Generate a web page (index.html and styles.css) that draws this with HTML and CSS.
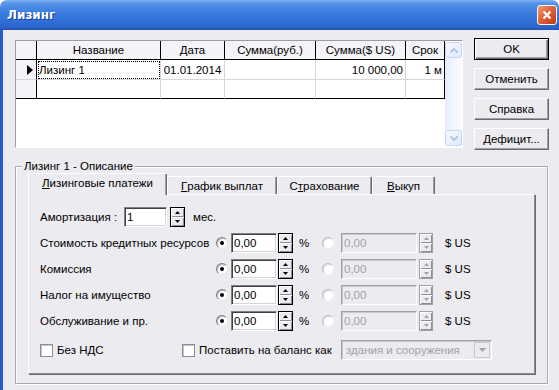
FILE: index.html
```html
<!DOCTYPE html>
<html>
<head>
  <title>Лизинг</title>
  <link rel="stylesheet" href="styles.css">
</head>
<body>
  <div class="window">
    <div class="titlebar">
      <span class="title">Лизинг</span>
      <span class="close">
        <svg class="close-icon" viewBox="0 0 10 10">
          <path d="M1.5,1.5 L8.5,8.5 M8.5,1.5 L1.5,8.5"/>
        </svg>
      </span>
    </div>

    <div class="client">
      <div class="top">
        <div class="grid">
          <div class="grid-body">
            <div class="grid-row header">
              <div class="cell fixed"></div>
              <div class="cell">Название</div>
              <div class="cell">Дата</div>
              <div class="cell">Сумма(руб.)</div>
              <div class="cell">Сумма($ US)</div>
              <div class="cell">Срок</div>
            </div>
            <div class="grid-row first">
              <div class="cell fixed indicator">
                <svg class="pointer" viewBox="0 0 6 10"><path d="M0,0 L6,5 L0,10Z"/></svg>
              </div>
              <div class="cell focus">Лизинг 1</div>
              <div class="cell center">01.01.2014</div>
              <div class="cell"></div>
              <div class="cell right">10 000,00</div>
              <div class="cell right last">1 м</div>
            </div>
            <div class="grid-row bottom">
              <div class="cell fixed"></div>
              <div class="cell"></div>
              <div class="cell"></div>
              <div class="cell"></div>
              <div class="cell"></div>
              <div class="cell last"></div>
            </div>
          </div>
          <div class="vscroll">
            <div class="sb-btn">
              <svg class="chevron" viewBox="0 0 8 5"><path d="M0.5,4.5 L4,1 L7.5,4.5"/></svg>
            </div>
            <div class="sb-track"></div>
            <div class="sb-btn">
              <svg class="chevron" viewBox="0 0 8 5"><path d="M0.5,0.5 L4,4 L7.5,0.5"/></svg>
            </div>
          </div>
        </div>

        <div class="buttons">
          <button class="btn default">OK</button>
          <button class="btn">Отменить</button>
          <button class="btn">Справка</button>
          <button class="btn">Дефицит...</button>
        </div>
      </div>

      <fieldset class="group">
        <legend>Лизинг 1 - Описание</legend>

        <div class="tabs">
          <div class="tab active w1"><u>Л</u>изинговые платежи</div>
          <div class="tab w2"><u>Г</u>рафик выплат</div>
          <div class="tab w3">С<u>т</u>рахование</div>
          <div class="tab w4"><u>В</u>ыкуп</div>
        </div>

        <div class="panel">
          <div class="row amort">
            <span class="label">Амортизация :</span>
            <span class="edit short">1</span>
            <span class="spin">
              <span class="spin-btn"><svg class="arrow" viewBox="0 0 5 3"><path d="M0,3 L2.5,0 L5,3Z"/></svg></span>
              <span class="spin-btn"><svg class="arrow" viewBox="0 0 5 3"><path d="M0,0 L2.5,3 L5,0Z"/></svg></span>
            </span>
            <span class="unit">мес.</span>
          </div>

          <div class="row rate">
            <span class="label">Стоимость кредитных ресурсов</span>
            <span class="radio checked"><span class="dot"></span></span>
            <span class="edit">0,00</span>
            <span class="spin">
              <span class="spin-btn"><svg class="arrow" viewBox="0 0 5 3"><path d="M0,3 L2.5,0 L5,3Z"/></svg></span>
              <span class="spin-btn"><svg class="arrow" viewBox="0 0 5 3"><path d="M0,0 L2.5,3 L5,0Z"/></svg></span>
            </span>
            <span class="pct">%</span>
            <span class="radio disabled"></span>
            <span class="edit wide disabled">0,00</span>
            <span class="spin disabled">
              <span class="spin-btn"><svg class="arrow" viewBox="0 0 5 3"><path d="M0,3 L2.5,0 L5,3Z"/></svg></span>
              <span class="spin-btn"><svg class="arrow" viewBox="0 0 5 3"><path d="M0,0 L2.5,3 L5,0Z"/></svg></span>
            </span>
            <span class="unit">$ US</span>
          </div>

          <div class="row rate">
            <span class="label">Комиссия</span>
            <span class="radio checked"><span class="dot"></span></span>
            <span class="edit">0,00</span>
            <span class="spin">
              <span class="spin-btn"><svg class="arrow" viewBox="0 0 5 3"><path d="M0,3 L2.5,0 L5,3Z"/></svg></span>
              <span class="spin-btn"><svg class="arrow" viewBox="0 0 5 3"><path d="M0,0 L2.5,3 L5,0Z"/></svg></span>
            </span>
            <span class="pct">%</span>
            <span class="radio disabled"></span>
            <span class="edit wide disabled">0,00</span>
            <span class="spin disabled">
              <span class="spin-btn"><svg class="arrow" viewBox="0 0 5 3"><path d="M0,3 L2.5,0 L5,3Z"/></svg></span>
              <span class="spin-btn"><svg class="arrow" viewBox="0 0 5 3"><path d="M0,0 L2.5,3 L5,0Z"/></svg></span>
            </span>
            <span class="unit">$ US</span>
          </div>

          <div class="row rate">
            <span class="label">Налог на имущество</span>
            <span class="radio checked"><span class="dot"></span></span>
            <span class="edit">0,00</span>
            <span class="spin">
              <span class="spin-btn"><svg class="arrow" viewBox="0 0 5 3"><path d="M0,3 L2.5,0 L5,3Z"/></svg></span>
              <span class="spin-btn"><svg class="arrow" viewBox="0 0 5 3"><path d="M0,0 L2.5,3 L5,0Z"/></svg></span>
            </span>
            <span class="pct">%</span>
            <span class="radio disabled"></span>
            <span class="edit wide disabled">0,00</span>
            <span class="spin disabled">
              <span class="spin-btn"><svg class="arrow" viewBox="0 0 5 3"><path d="M0,3 L2.5,0 L5,3Z"/></svg></span>
              <span class="spin-btn"><svg class="arrow" viewBox="0 0 5 3"><path d="M0,0 L2.5,3 L5,0Z"/></svg></span>
            </span>
            <span class="unit">$ US</span>
          </div>

          <div class="row rate">
            <span class="label">Обслуживание и пр.</span>
            <span class="radio checked"><span class="dot"></span></span>
            <span class="edit">0,00</span>
            <span class="spin">
              <span class="spin-btn"><svg class="arrow" viewBox="0 0 5 3"><path d="M0,3 L2.5,0 L5,3Z"/></svg></span>
              <span class="spin-btn"><svg class="arrow" viewBox="0 0 5 3"><path d="M0,0 L2.5,3 L5,0Z"/></svg></span>
            </span>
            <span class="pct">%</span>
            <span class="radio disabled"></span>
            <span class="edit wide disabled">0,00</span>
            <span class="spin disabled">
              <span class="spin-btn"><svg class="arrow" viewBox="0 0 5 3"><path d="M0,3 L2.5,0 L5,3Z"/></svg></span>
              <span class="spin-btn"><svg class="arrow" viewBox="0 0 5 3"><path d="M0,0 L2.5,3 L5,0Z"/></svg></span>
            </span>
            <span class="unit">$ US</span>
          </div>

          <div class="row checks">
            <span class="check-item"><span class="check"></span>Без НДС</span>
            <span class="check-item"><span class="check"></span>Поставить на баланс как</span>
            <span class="combo">
              <span class="combo-text">здания и сооружения</span>
              <span class="combo-btn"><svg class="combo-arrow" viewBox="0 0 7 4"><path d="M0,0 L3.5,4 L7,0Z"/></svg></span>
            </span>
          </div>
        </div>
      </fieldset>
    </div>
  </div>
</body>
</html>
```

FILE: styles.css
```css
:root {
  --face: #ecebf0;
  --light: #ffffff;
  --shadow: #a09fa6;
  --dark: #6b6a70;
  --darkest: #404040;
  --text: #000000;
  --text-disabled: #a3a2a8;
  --grid-line: #d6d6da;
  --fixed: #f4f3f7;
  --frame: #2a5ad2;
}

* {
  box-sizing: border-box;
}

body {
  width: 559px;
  height: 390px;
  margin: 0;
  overflow: hidden;
  font-family: 'Liberation Sans', Arial, sans-serif;
  font-size: 11.5px;
  line-height: 14px;
  color: var(--text);
  background: #ffffff;
}

.window {
  display: flex;
  flex-direction: column;
  height: 390px;
}

/* title bar */
.titlebar {
  flex: none;
  height: 30px;
  display: flex;
  align-items: center;
  justify-content: space-between;
  padding: 0 2px 0 7px;
  border-radius: 7px 7px 0 0;
  background: linear-gradient(to bottom, #7cb0f2 0%, #5492e8 12%, #3c7fe0 40%, #3170d6 70%, #2a62c9 92%, #1f50b0 100%);
}

.title {
  font-family: 'DejaVu Sans', sans-serif;
  font-size: 12px;
  font-weight: bold;
  color: #ffffff;
  text-shadow: 1px 1px 0 #113c9c;
}

.close {
  width: 20px;
  height: 20px;
  display: flex;
  align-items: center;
  justify-content: center;
  border: 1px solid #f4f4f4;
  border-radius: 3px;
  background: linear-gradient(135deg, #f0a07a 0%, #e06a3e 40%, #cf4b22 75%, #c03c18 100%);
}

.close-icon {
  width: 10px;
  height: 10px;
  fill: none;
  stroke: #ffffff;
  stroke-width: 2.2;
}

.client {
  flex: 1;
  padding: 8px 0 0 12px;
  background: var(--face);
  border-left: 3px solid var(--frame);
}

.top {
  display: flex;
  align-items: flex-start;
}

/* data grid */
.grid {
  display: flex;
  width: 448px;
  height: 108px;
  margin-top: 2px;
  background: #ffffff;
  border: 1px solid;
  border-color: #9c9ba1 #ffffff #ffffff #9c9ba1;
}

.grid-body {
  width: 429px;
}

.grid-row {
  display: grid;
  grid-template-columns: 21px 124px 64px 91px 90px 39px;
  height: 19px;
}

.grid-row.first {
  height: 20px;
}

.cell {
  display: flex;
  align-items: center;
  padding: 0 2px;
  white-space: nowrap;
  overflow: hidden;
  border-right: 1px solid var(--grid-line);
  border-bottom: 1px solid var(--grid-line);
}

.header .cell {
  justify-content: center;
  background: var(--fixed);
  border-color: #000000;
}

.cell.fixed {
  background: var(--fixed);
  border-right-color: #000000;
}

.cell.last {
  border-right-color: #000000;
}

.grid-row.bottom .cell {
  border-bottom-color: #000000;
}

.cell.center {
  justify-content: center;
}

.cell.right {
  justify-content: flex-end;
}

.cell.focus {
  outline: 1px dotted #000000;
  outline-offset: -2px;
}

.indicator {
  justify-content: flex-end;
  padding-right: 3px;
}

.pointer {
  width: 6px;
  height: 10px;
  fill: #000000;
}

.vscroll {
  width: 17px;
  display: flex;
  flex-direction: column;
  padding: 1px 0;
}

.sb-btn {
  height: 16px;
  display: flex;
  align-items: center;
  justify-content: center;
  border: 1px solid #c9d7f3;
  border-radius: 2px;
  background: linear-gradient(135deg, #f6f9ff 0%, #dfe9fc 100%);
}

.sb-track {
  flex: 1;
  background: linear-gradient(to right, #e6edfb, #fbfcff);
}

.chevron {
  width: 8px;
  height: 5px;
  fill: none;
  stroke: #a9bde3;
  stroke-width: 1.6;
}

/* dialog buttons */
.buttons {
  display: flex;
  flex-direction: column;
  gap: 8px;
  margin-left: 11px;
}

.btn {
  width: 75px;
  height: 22px;
  padding: 0;
  font: inherit;
  color: var(--text);
  background: var(--face);
  border: 1px solid;
  border-color: var(--light) var(--dark) var(--dark) var(--light);
  box-shadow: inset -1px -1px 0 var(--shadow);
}

.btn.default {
  border-color: #000000;
  box-shadow: inset 1px 1px 0 var(--light), inset -1px -1px 0 var(--dark), inset -2px -2px 0 var(--shadow);
}

/* group box */
.group {
  width: 533px;
  margin: 9px 0 0 0;
  padding: 0 12px 9px 12px;
  border: 1px solid #a9a8ae;
  box-shadow: inset 1px 1px 0 var(--light), 1px 1px 0 var(--light);
}

.group legend {
  margin-left: -6px;
  padding: 0 2px;
  line-height: 14px;
  background: var(--face);
}

.tabs {
  display: flex;
  align-items: flex-end;
  height: 21px;
}

.tab {
  height: 18px;
  display: flex;
  align-items: center;
  justify-content: center;
  background: var(--face);
  border: 1px solid;
  border-bottom: none;
  border-color: var(--light) var(--dark) transparent var(--light);
  border-radius: 2px 2px 0 0;
  box-shadow: inset -1px 0 0 var(--shadow);
}

.tab.active {
  position: relative;
  z-index: 1;
  height: 22px;
  margin-bottom: -1px;
  padding-bottom: 3px;
}

.w1 { width: 139px; }
.w2 { width: 110px; }
.w3 { width: 95px; }
.w4 { width: 63px; }

.panel {
  height: 180px;
  display: flex;
  flex-direction: column;
  gap: 6px;
  padding: 12px 0 0 11px;
  border: 1px solid;
  border-color: var(--light) #8e8d93 #8e8d93 var(--light);
  box-shadow: 1px 1px 0 var(--dark);
}

.row {
  display: flex;
  align-items: center;
  height: 20px;
  white-space: nowrap;
}

.amort .label {
  width: 84px;
}

.amort .spin {
  margin-left: 3px;
}

.amort .unit {
  margin-left: 8px;
}

.rate {
  display: grid;
  grid-template-columns: 176px 15px 47px 20px 24px 19px 78px 26px auto;
  align-items: center;
}

/* edits */
.edit {
  width: 46px;
  height: 20px;
  display: flex;
  align-items: center;
  padding: 0 2px;
  background: #ffffff;
  border: 1px solid;
  border-color: #808080 var(--light) var(--light) #808080;
  box-shadow: inset 1px 1px 0 var(--darkest), inset -1px -1px 0 #d4d3d8;
}

.edit.short {
  width: 43px;
}

.edit.wide {
  width: 76px;
}

.edit.disabled {
  color: var(--text-disabled);
  background: var(--face);
  border-color: var(--shadow) var(--light) var(--light) var(--shadow);
  box-shadow: inset 1px 1px 0 #c9c8cd;
}

.spin {
  width: 15px;
  height: 20px;
  display: flex;
  flex-direction: column;
  border: 1px solid #000000;
}

.spin-btn {
  flex: 1;
  display: flex;
  align-items: center;
  justify-content: center;
  background: var(--face);
  box-shadow: inset 1px 1px 0 var(--light), inset -1px -1px 0 #8e8d93;
}

.arrow {
  width: 5px;
  height: 3px;
  fill: #000000;
}

.spin.disabled {
  width: 14px;
  border-color: var(--shadow);
}

.spin.disabled .arrow {
  fill: var(--text-disabled);
}

.pct {
  padding-left: 1px;
}

/* radios and checks */
.radio {
  width: 12px;
  height: 12px;
  display: flex;
  align-items: center;
  justify-content: center;
  border-radius: 50%;
  background: #ffffff;
  border: 1px solid;
  border-color: #808080 #e6e5ea #e6e5ea #808080;
  box-shadow: inset 1px 1px 0 #b8b7bc;
}

.radio .dot {
  width: 4px;
  height: 4px;
  border-radius: 50%;
  background: #000000;
}

.radio.disabled {
  border-color: #bdbcc1 #f4f4f6 #f4f4f6 #bdbcc1;
  box-shadow: inset 1px 1px 0 #dedde2;
}

.checks {
  display: grid;
  grid-template-columns: 142px 159px 151px;
  margin-top: 3px;
}

.check-item {
  display: flex;
  align-items: center;
  gap: 4px;
}

.check {
  width: 13px;
  height: 13px;
  background: #ffffff;
  border: 1px solid #8f8e94;
  box-shadow: inset 1px 1px 0 #c4c3c8;
}

.combo {
  width: 151px;
  height: 20px;
  display: flex;
  align-items: center;
  padding: 0 1px 0 4px;
  color: var(--text-disabled);
  border: 1px solid;
  border-color: var(--shadow) var(--light) var(--light) var(--shadow);
  box-shadow: inset 1px 1px 0 #c9c8cd;
}

.combo-text {
  flex: 1;
}

.combo-btn {
  width: 16px;
  height: 16px;
  display: flex;
  align-items: center;
  justify-content: center;
  border: 1px solid #c9c8cd;
}

.combo-arrow {
  width: 7px;
  height: 4px;
  fill: var(--text-disabled);
}
```
